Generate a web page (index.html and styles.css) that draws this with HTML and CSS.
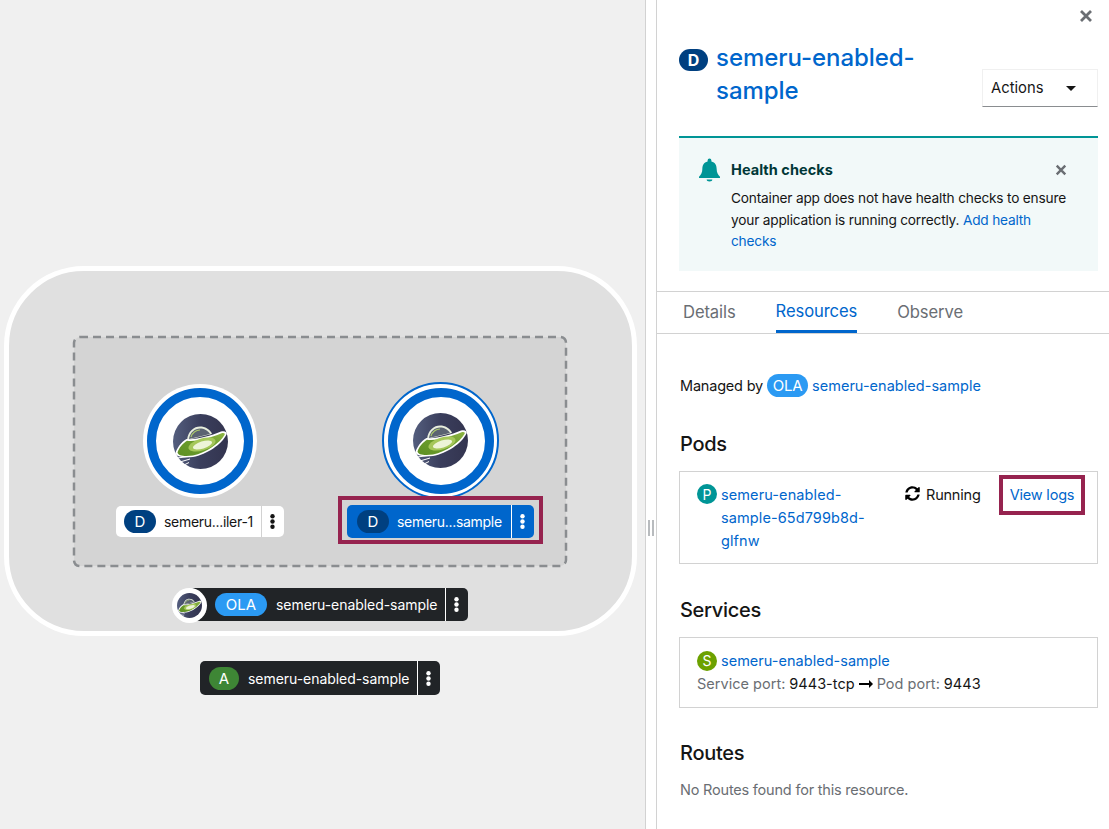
FILE: index.html
```html
<!DOCTYPE html>
<html lang="en">
<head>
<meta charset="utf-8">
<title>Topology</title>
<link rel="stylesheet" href="styles.css">
</head>
<body>
<svg class="defs" width="0" height="0" aria-hidden="true">
  <defs>
    <linearGradient id="disc" x1="0" x2="1" y1="0" y2="0">
      <stop offset="0" stop-color="#545e7e"/>
      <stop offset="0.5" stop-color="#3a3e5c"/>
      <stop offset="1" stop-color="#33344f"/>
    </linearGradient>
    <linearGradient id="hull" x1="0" x2="1" y1="1" y2="0">
      <stop offset="0" stop-color="#5d8f24"/>
      <stop offset="0.6" stop-color="#6f9f2e"/>
      <stop offset="1" stop-color="#8eb544"/>
    </linearGradient>
    <symbol id="ufo" viewBox="0 0 55 55">
      <circle cx="27.500" cy="27.500" r="27.500" fill="url(#disc)"/>
      <path d="M14 26 C15 17 21 12.500 27 12.500 C32 12.500 37 15 39 20 Z" fill="#e8eedd"/>
      <path d="M16 25 C17 18 22 14.500 27 14.500 C31 14.500 35 16.500 37 20 Z" fill="#5b6372"/>
      <path d="M18 23 C19 19 23 16 27 16" fill="none" stroke="#a9c76a" stroke-width="1.200"/>
      <path d="M2.500 39 C4 34 8 28 13.500 25 C23 26 37 22 48 17.500 C52 16.500 54.500 18 53.500 20.500 C49 30 34 40.500 20 43 C11 44 3 43 2.500 39 Z" fill="#fff"/>
      <path d="M4.500 38.500 C6 34 10 29 14 26.800 C24 28 37 24 48 19.500 C51 18.500 52.500 19.500 51.500 21 C47 29 33 39 20 41.500 C12 42.500 5 42 4.500 38.500 Z" fill="url(#hull)"/>
      <ellipse cx="29" cy="30.500" rx="14" ry="6" transform="rotate(-17 29 30.500)" fill="#a5c75a"/>
      <ellipse cx="29.500" cy="31" rx="10" ry="3.600" transform="rotate(-17 29.500 31)" fill="#edf4d8"/>
      <path d="M4 44 L16 42.500 M7 48 L17 45 M11 51 L16 48.500" stroke="#fff" stroke-width="1" fill="none"/>
    </symbol>
    <symbol id="kebab" viewBox="0 0 5 15">
      <circle cx="2.500" cy="2.300" r="2.200"/><circle cx="2.500" cy="7.500" r="2.200"/><circle cx="2.500" cy="12.700" r="2.200"/>
    </symbol>
    <symbol id="times" viewBox="0 0 14 14">
      <path d="M2 2 L12 12 M12 2 L2 12" fill="none" stroke="currentColor" stroke-width="2.800"/>
    </symbol>
  </defs>
</svg>

<main class="app">
  <section class="canvas">
    <div class="app-group"></div>
    <svg class="pod-group" viewBox="0 0 498 235"><rect class="pod-rect" x="3" y="3" width="492" height="229" rx="6"/></svg>

    <div class="node node-plain"><div class="ring"><svg class="logo"><use href="#ufo"/></svg></div></div>
    <div class="node node-selected"><div class="ring"><svg class="logo"><use href="#ufo"/></svg></div></div>

    <div class="label label-plain">
      <span class="tag tag-d">D</span><span class="label-text">semeru...iler-1</span>
      <span class="kebab"><svg class="kebab-icon"><use href="#kebab"/></svg></span>
    </div>
    <div class="highlight highlight-label"></div>
    <div class="label label-selected">
      <span class="tag tag-d">D</span><span class="label-text">semeru...sample</span>
      <span class="kebab"><svg class="kebab-icon"><use href="#kebab"/></svg></span>
    </div>

    <div class="label label-dark label-ola">
      <span class="tag tag-ola">OLA</span><span class="label-text">semeru-enabled-sample</span>
      <span class="kebab"><svg class="kebab-icon"><use href="#kebab"/></svg></span>
    </div>
    <div class="mini"><svg class="mini-logo"><use href="#ufo"/></svg></div>

    <div class="label label-dark label-app">
      <span class="tag tag-a">A</span><span class="label-text">semeru-enabled-sample</span>
      <span class="kebab"><svg class="kebab-icon"><use href="#kebab"/></svg></span>
    </div>
  </section>

  <div class="splitter"><span class="grip"></span></div>

  <aside class="panel">
    <div class="close-row"><svg class="close"><use href="#times"/></svg></div>
    <header class="head">
      <div class="title-wrap">
        <span class="title-tag">D</span>
        <h1 class="title">semeru-enabled-sample</h1>
      </div>
      <div class="actions"><span>Actions</span><span class="caret"></span></div>
    </header>

    <div class="alert">
      <svg class="bell" viewBox="0 0 22 24"><path d="M11 0 a2 2 0 0 1 2 2 v1 c4 1 5.500 4 5.500 8 c0 4 1.500 6 3.500 8 v1.500 H0 V19 c2 -2 3.500 -4 3.500 -8 c0 -4 1.500 -7 5.500 -8 V2 a2 2 0 0 1 2 -2 Z M8 22 h6 a3 2 0 0 1 -6 0 Z" fill="#009596"/></svg>
      <div class="alert-body">
        <div class="alert-title-row">
          <h2 class="alert-title">Health checks</h2>
          <svg class="alert-close"><use href="#times"/></svg>
        </div>
        <p class="alert-text">Container app does not have health checks to ensure your application is running correctly. <a class="link" href="#">Add health checks</a></p>
      </div>
    </div>

    <nav class="tabs">
      <a class="tab" href="#">Details</a>
      <a class="tab tab-active" href="#">Resources</a>
      <a class="tab" href="#">Observe</a>
    </nav>

    <div class="content">
      <p class="managed">Managed by <span class="pill">OLA</span> <a class="link name" href="#">semeru-enabled-sample</a></p>

      <h2 class="heading heading-pods">Pods</h2>
      <div class="card card-pod">
        <span class="dot dot-p">P</span>
        <a class="link pod-name" href="#">semeru-enabled-sample-65d799b8d-glfnw</a>
        <span class="status">
          <svg class="sync" viewBox="0 0 512 512"><path d="M370.700 133.300C339.500 104 298.900 88 255.800 88c-77.500.1-144.300 53.200-162.800 126.900-1.300 5.400-6.100 9.200-11.700 9.200H24.100c-7.500 0-13.200-6.800-11.800-14.200C33.900 94.900 134.800 8 256 8c66.400 0 126.800 26.100 171.300 68.700L463 41c15.100-15.100 41-4.400 41 17v134c0 13.300-10.700 24-24 24H346c-21.400 0-32.100-25.900-17-41l41.700-41.700zM32 296h134c21.400 0 32.100 25.900 17 41l-41.700 41.700c31.200 29.300 71.800 45.300 114.900 45.300 77.400-.1 144.300-53.100 162.800-126.800 1.300-5.400 6.100-9.200 11.700-9.200h57.300c7.500 0 13.200 6.800 11.800 14.200C478.100 417.100 377.200 504 256 504c-66.400 0-126.800-26.100-171.300-68.700L49 471c-15.100 15.100-41 4.400-41-17V320c0-13.300 10.700-24 24-24z"/></svg>
          Running
        </span>
        <span class="logs-wrap"><a class="link" href="#">View logs</a></span>
      </div>

      <h2 class="heading heading-services">Services</h2>
      <div class="card card-service">
        <div class="service-line"><span class="dot dot-s">S</span><a class="link" href="#">semeru-enabled-sample</a></div>
        <div class="service-line"><span class="muted">Service port:</span> <span>9443-tcp</span> <svg class="arrow" viewBox="0 0 14 8"><path d="M0 3 H10 V0 L14 4 L10 8 V5 H0 Z"/></svg> <span class="muted">Pod port:</span> <span>9443</span></div>
      </div>

      <h2 class="heading heading-routes">Routes</h2>
      <p class="muted empty">No Routes found for this resource.</p>
    </div>
  </aside>
</main>
</body>
</html>
```
FILE: styles.css
```css
* { box-sizing: border-box; }
html, body { margin: 0; height: 100%; overflow: hidden; }
body { font-family: "Inter", "Liberation Sans", sans-serif; font-size: 14.5px; color: #151515; background: #fff; }
.defs { position: absolute; }
.app { display: flex; width: 1109px; height: 829px; }
a { text-decoration: none; }
p, h1, h2 { margin: 0; }

/* topology canvas */
.canvas { position: relative; width: 646px; flex: none; background: #f0f0f0; border-right: 1px solid #d2d2d2; }
.app-group { position: absolute; left: 4px; top: 266px; width: 633px; height: 370px; background: #e0e0e0; border: 5px solid #fff; border-radius: 80px; }
.pod-group { position: absolute; left: 71px; top: 334px; width: 498px; height: 235px; }
.pod-rect { fill: #d4d4d4; stroke: #8a8d90; stroke-width: 2.500; stroke-dasharray: 8 5; }
.node { position: absolute; border-radius: 50%; display: flex; align-items: center; justify-content: center; }
.node-plain { left: 143px; top: 384px; width: 114px; height: 114px; background: #fff; }
.node-selected { left: 382px; top: 382px; width: 117px; height: 117px; background: #fff; border: 2px solid #06c; }
.ring { width: 106px; height: 106px; border: 9px solid #06c; border-radius: 50%; background: #fff; display: flex; align-items: center; justify-content: center; }
.logo { width: 55px; height: 55px; }

.label { position: absolute; display: flex; align-items: center; border-radius: 5px; white-space: nowrap; font-size: 14px; letter-spacing: -.3px; }
.label-text { margin-left: 8px; flex: 1; }
.tag { height: 23px; border-radius: 12px; color: #fff; display: flex; align-items: center; justify-content: center; font-size: 15px; flex: none; letter-spacing: 0; }
.tag-d { width: 32px; background: #004080; }
.tag-ola { width: 52px; background: #2b9af3; }
.tag-a { width: 30px; background: #3e8635; }
.kebab { width: 23px; height: 100%; border-left: 1px solid currentColor; display: flex; align-items: center; justify-content: center; flex: none; padding-right: 1px; }
.kebab-icon { width: 5px; height: 15px; fill: currentColor; }
.label-plain { left: 116px; top: 506px; width: 168px; height: 31px; padding-left: 8px; background: #fff; color: #151515; }
.label-plain .kebab { border-left-color: #d2d2d2; }
.label-selected { left: 347px; top: 505px; width: 187px; height: 33px; padding-left: 10px; background: #06c; color: #fff; }
.highlight { position: absolute; border: 4px solid #96234f; }
.highlight-label { left: 338px; top: 496px; width: 205px; height: 48px; }
.label-dark { background: #212427; color: #fff; height: 33px; letter-spacing: -.05px; }
.label-dark .label-text { margin-left: 9px; }
.label-ola { left: 190px; top: 588px; width: 278px; padding-left: 25px; height: 33px; }
.label-app { left: 200px; top: 661px; width: 240px; height: 34px; padding-left: 9px; }
.mini { position: absolute; left: 172px; top: 588px; width: 35px; height: 35px; border-radius: 50%; background: #fff; display: flex; align-items: center; justify-content: center; }
.mini-logo { width: 25px; height: 25px; }

.splitter { flex: none; display: flex; align-items: center; justify-content: center; padding-top: 227px; border-right: 1px solid #d2d2d2; width: 11px; }
.grip { width: 6px; height: 16px; border-left: 2px solid #b8bbbe; border-right: 2px solid #b8bbbe; }

/* side panel */
.panel { flex: 1; min-width: 0; display: flex; flex-direction: column; }
.close-row { height: 49px; display: flex; justify-content: flex-end; padding: 9px 16px 0 0; flex: none; }
.close { width: 14px; height: 14px; color: #6a6e73; }
.head { display: flex; justify-content: space-between; align-items: flex-start; padding: 0 11px 0 22px; height: 87px; flex: none; }
.title-wrap { display: flex; width: 270px; align-items: flex-start; }
.title-tag { width: 29px; height: 22px; border-radius: 11px; background: #004080; color: #fff; font-weight: 700; font-size: 16px; display: flex; align-items: center; justify-content: center; flex: none; }
.title { margin: -8px 0 0 8px; font-size: 24px; line-height: 33px; font-weight: 500; color: #06c; width: 215px; letter-spacing: -.05px; }
.actions { width: 116px; height: 38px; margin-top: 20px; border: 1px solid #f0f0f0; border-bottom-color: #8a8d90; display: flex; align-items: center; justify-content: space-between; padding: 0 21px 0 8px; font-size: 14.800px; }
.caret { border: 5px solid transparent; border-top: 5px solid #151515; border-bottom: 0; }

.alert { margin: 0 11px 0 22px; height: 135px; background: #f2f9f9; border-top: 2px solid #009596; padding: 20px 20px 0 20px; display: flex; gap: 11px; flex: none; }
.bell { width: 21px; height: 24px; flex: none; }
.alert-body { flex: 1; min-width: 0; }
.alert-title-row { display: flex; justify-content: space-between; align-items: center; height: 23px; }
.alert-title { font-size: 14.500px; font-weight: 700; color: #003737; letter-spacing: .05px; }
.alert-close { width: 12px; height: 12px; color: #6a6e73; margin-right: 11px; }
.alert-text { margin-top: 7px; font-size: 13.700px; line-height: 21.500px; letter-spacing: -.2px; }
.link { color: #06c; }

.tabs { display: flex; margin-top: 20px; height: 43px; border-top: 1px solid #d2d2d2; border-bottom: 1px solid #d2d2d2; padding-left: 26px; gap: 40px; flex: none; }
.tab { color: #6a6e73; font-size: 16.600px; display: flex; align-items: center; height: 40px; letter-spacing: -.1px; }
.tab-active { color: #06c; border-bottom: 3px solid #06c; height: 41px; padding-bottom: 0; padding-top: 0; }

.content { padding: 39px 11px 0 23px; flex: 1; }
.managed { display: flex; align-items: center; height: 24px; gap: 4px; font-size: 14.500px; letter-spacing: -.2px; white-space: nowrap; }
.name { letter-spacing: .03px; }
.pill { width: 41px; height: 23px; border-radius: 12px; background: #2b9af3; color: #fff; display: flex; align-items: center; justify-content: center; font-size: 15px; }
.heading { font-size: 20px; font-weight: 500; line-height: 28px; letter-spacing: -.3px; color: #151515; }
.heading-pods { margin-top: 33px; }
.heading-services { margin-top: 32px; }
.heading-routes { margin-top: 31px; }
.card { border: 1px solid #d2d2d2; margin-left: -1px; letter-spacing: -.2px; }
.card-pod { margin-top: 13px; height: 93px; position: relative; display: flex; padding: 11px 0 0 17px; line-height: 23px; }
.dot { width: 20px; height: 20px; border-radius: 50%; color: #fff; display: inline-flex; align-items: center; justify-content: center; font-size: 14px; flex: none; letter-spacing: 0; }
.dot-p { background: #009596; margin-top: 1px; }
.dot-s { background: #6ca100; }
.pod-name { width: 160px; margin-left: 4px; letter-spacing: .1px; }
.status { margin-left: 24px; display: flex; align-items: flex-start; gap: 6px; white-space: nowrap; width: 77px; flex: none; }
.sync { width: 15px; height: 15px; margin-top: 3px; flex: none; }
.logs-wrap { position: absolute; left: 319px; top: 3px; width: 86px; height: 40px; border: 4px solid #96234f; display: flex; align-items: center; justify-content: center; white-space: nowrap; padding-bottom: 2px; }
.card-service { margin-top: 13px; height: 71px; padding: 11px 0 0 17px; white-space: nowrap; letter-spacing: .02px; }
.service-line { display: flex; align-items: center; height: 23px; gap: 4px; color: #151515; }
.arrow { width: 14px; height: 8px; flex: none; }
.muted { color: #6a6e73; }
.empty { margin-top: 14px; letter-spacing: -.2px; }
```
